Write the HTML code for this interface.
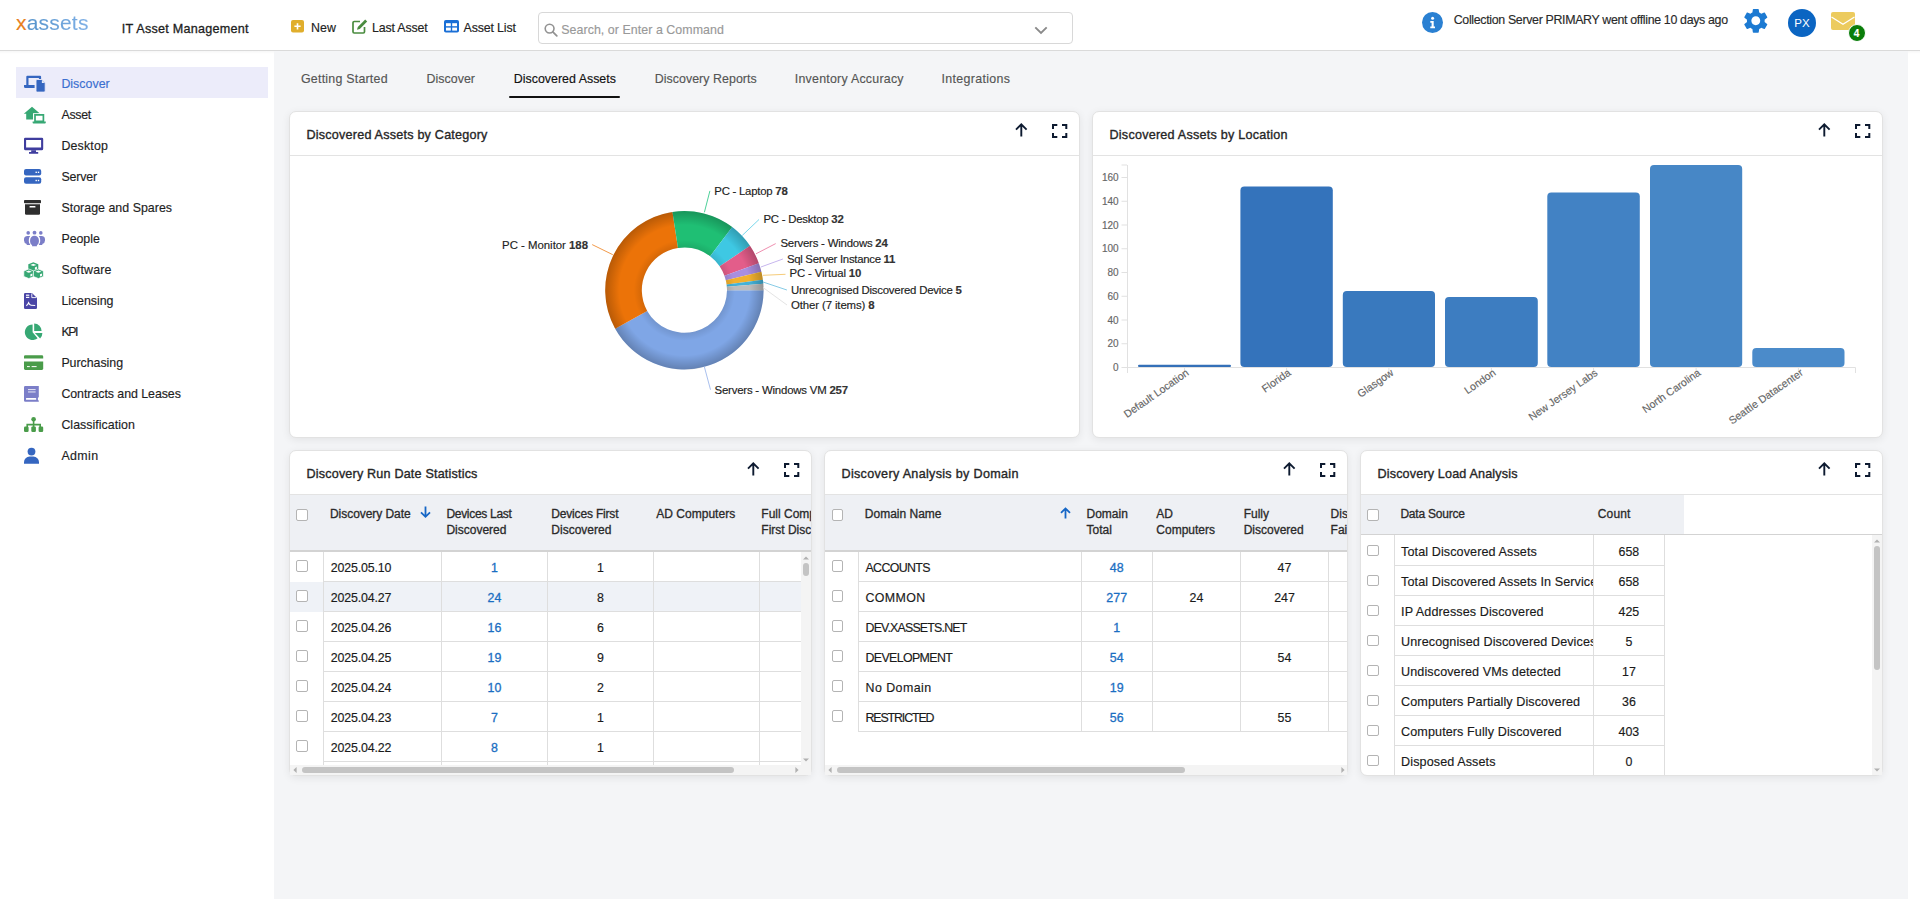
<!DOCTYPE html><html><head><meta charset="utf-8"><title>xassets</title><style>
*{box-sizing:border-box;margin:0;padding:0}
html,body{width:1920px;height:911px;overflow:hidden;background:#fff;font-family:"Liberation Sans",sans-serif;color:#222}
.t{position:absolute;line-height:1;white-space:nowrap;-webkit-text-stroke:0.15px currentColor}
.a{position:absolute}
svg{position:absolute;overflow:visible}
.card{position:absolute;background:#fff;border:1px solid #e2e2e2;border-radius:7px;box-shadow:0 2px 8px rgba(0,0,0,0.075)}
</style></head><body>
<div class="a" style="left:0;top:0;width:1920px;height:50px;background:#fff"></div>
<div class="a" style="left:0;top:50px;width:1920px;height:1px;background:#dadada"></div>
<div class="a" style="left:0;top:51px;width:1920px;height:3px;background:linear-gradient(rgba(0,0,0,0.03),rgba(0,0,0,0))"></div>
<div class="t" style="left:16px;top:11.5px;font-size:21px;line-height:21px;letter-spacing:0.2px;"><span style="color:#e87f1e">x</span><span style="background:linear-gradient(90deg,#5593cb,#7fb0e6);-webkit-background-clip:text;color:transparent">assets</span></div>
<div class="t" style="left:121.70px;top:23.00px;font-size:12.6px;color:#1e1e1e;letter-spacing:0.259px;-webkit-text-stroke:0.3px currentColor;">IT Asset Management</div>
<svg style="left:291px;top:20px" width="13" height="13" viewBox="0 0 13 13"><rect x="0" y="0" width="13" height="12.5" rx="2" fill="#e0ae2c"/><path d="M6.5 3.2v6.2M3.4 6.3h6.2" stroke="#fff" stroke-width="1.6"/></svg>
<div class="t" style="left:311.00px;top:22.00px;font-size:12.4px;color:#222;letter-spacing:0.097px;">New</div>
<svg style="left:352px;top:19px" width="16" height="15" viewBox="0 0 16 15"><path d="M8 2.5H2.2a1.2 1.2 0 0 0-1.2 1.2v9.1a1.2 1.2 0 0 0 1.2 1.2h9.1a1.2 1.2 0 0 0 1.2-1.2V8" fill="none" stroke="#4a8c3f" stroke-width="1.7"/><path d="M13.2 0.6l2 2-7.4 7.4-2.8 0.8 0.8-2.8z" fill="#4a8c3f"/></svg>
<div class="t" style="left:372.00px;top:22.00px;font-size:12.4px;color:#222;letter-spacing:-0.162px;">Last Asset</div>
<svg style="left:444px;top:20px" width="15" height="13" viewBox="0 0 15 13"><rect x="0" y="0" width="15" height="12.6" rx="1.8" fill="#1a6fd6"/><rect x="2" y="3.2" width="4.8" height="3" fill="#fff"/><rect x="8.2" y="3.2" width="4.8" height="3" fill="#fff"/><rect x="2" y="7.6" width="4.8" height="3" fill="#fff"/><rect x="8.2" y="7.6" width="4.8" height="3" fill="#fff"/></svg>
<div class="t" style="left:463.50px;top:22.00px;font-size:12.4px;color:#222;letter-spacing:-0.139px;">Asset List</div>
<div class="a" style="left:538px;top:12px;width:535px;height:32px;border:1px solid #d8d8d8;border-radius:4px;background:#fff"></div>
<svg style="left:544px;top:22.5px" width="14" height="14" viewBox="0 0 14 14"><circle cx="5.6" cy="5.6" r="4.4" fill="none" stroke="#929292" stroke-width="1.6"/><path d="M8.8 8.8l4 4" stroke="#929292" stroke-width="1.8" stroke-linecap="round"/></svg>
<div class="t" style="left:561.25px;top:24.00px;font-size:12.4px;color:#999999;letter-spacing:0.059px;">Search, or Enter a Command</div>
<svg style="left:1034px;top:25.5px" width="14" height="9" viewBox="0 0 14 9"><path d="M1.3 1.3l5.7 5.7 5.7-5.7" fill="none" stroke="#8a8a8a" stroke-width="1.9"/></svg>
<svg style="left:1422px;top:11.5px" width="21" height="21" viewBox="0 0 21 21"><circle cx="10.5" cy="10.5" r="10.5" fill="#2a80d2"/><circle cx="10.6" cy="6.2" r="1.5" fill="#fff"/><path d="M8.3 9h3.4v5.6h1.3v1.7H8.3v-1.7h1.3v-3.9H8.3z" fill="#fff"/></svg>
<div class="t" style="left:1453.75px;top:14.00px;font-size:12.4px;color:#2a2a2a;letter-spacing:-0.334px;">Collection Server PRIMARY went offline 10 days ago</div>
<svg style="left:1741.4px;top:6px" width="29.6" height="29.6" viewBox="0 0 24 24"><path fill="#1c7ad2" fill-rule="evenodd" d="M19.14 12.94c.04-.3.06-.61.06-.94 0-.32-.02-.64-.07-.94l2.03-1.58a.49.49 0 0 0 .12-.61l-1.92-3.32a.488.488 0 0 0-.59-.22l-2.39.96c-.5-.38-1.03-.7-1.62-.94l-.36-2.54a.484.484 0 0 0-.48-.41h-3.84c-.24 0-.43.17-.47.41l-.36 2.54c-.59.24-1.13.57-1.62.94l-2.39-.96c-.22-.08-.47 0-.59.22L2.74 8.87c-.12.21-.08.47.12.61l2.03 1.58c-.05.3-.09.63-.09.94s.02.64.07.94l-2.03 1.58a.49.49 0 0 0-.12.61l1.92 3.32c.12.22.37.29.59.22l2.39-.96c.5.38 1.03.7 1.62.94l.36 2.54c.05.24.24.41.48.41h3.84c.24 0 .44-.17.47-.41l.36-2.54c.59-.24 1.13-.56 1.62-.94l2.39.96c.22.08.47 0 .59-.22l1.92-3.32c.12-.22.07-.47-.12-.61l-2.01-1.58zM12 15.6c-1.98 0-3.6-1.62-3.6-3.6s1.62-3.6 3.6-3.6 3.6 1.62 3.6 3.6-1.62 3.6-3.6 3.6z"/></svg>
<div class="a" style="left:1788px;top:8.75px;width:28px;height:28px;border-radius:50%;background:#0b65c2"></div>
<div class="t" style="left:1794.33px;top:18.00px;font-size:11.5px;color:#fff;-webkit-text-stroke:0;">PX</div>
<svg style="left:1830.8px;top:12px" width="24" height="18" viewBox="0 0 24 18"><rect x="0" y="0" width="24" height="18" rx="2" fill="#eccb5e"/><path d="M0.5 5l11.5 7.3L23.5 5" fill="none" stroke="#fff" stroke-width="1.3"/></svg>
<div class="a" style="left:1847.5px;top:23.5px;width:18px;height:18px;border-radius:50%;background:#0a7d0a;border:1px solid #fff"></div>
<div class="t" style="left:1853.72px;top:29.00px;font-size:10px;color:#fff;font-weight:bold;">4</div>
<div class="a" style="left:16px;top:67px;width:252px;height:31px;background:#ececfa"></div>
<div class="t" style="left:61.40px;top:78.00px;font-size:12.4px;color:#3b6fd0;letter-spacing:0.010px;">Discover</div>
<div class="t" style="left:61.40px;top:109.00px;font-size:12.4px;color:#1e1e1e;letter-spacing:-0.278px;">Asset</div>
<div class="t" style="left:61.40px;top:140.00px;font-size:12.4px;color:#1e1e1e;letter-spacing:0.185px;">Desktop</div>
<div class="t" style="left:61.40px;top:171.00px;font-size:12.4px;color:#1e1e1e;letter-spacing:-0.165px;">Server</div>
<div class="t" style="left:61.40px;top:202.00px;font-size:12.4px;color:#1e1e1e;letter-spacing:0.024px;">Storage and Spares</div>
<div class="t" style="left:61.40px;top:233.00px;font-size:12.4px;color:#1e1e1e;letter-spacing:-0.022px;">People</div>
<div class="t" style="left:61.40px;top:264.00px;font-size:12.4px;color:#1e1e1e;letter-spacing:0.152px;">Software</div>
<div class="t" style="left:61.40px;top:295.00px;font-size:12.4px;color:#1e1e1e;letter-spacing:-0.036px;">Licensing</div>
<div class="t" style="left:61.40px;top:326.00px;font-size:12.4px;color:#1e1e1e;letter-spacing:-1.494px;">KPI</div>
<div class="t" style="left:61.40px;top:357.00px;font-size:12.4px;color:#1e1e1e;letter-spacing:-0.037px;">Purchasing</div>
<div class="t" style="left:61.40px;top:388.00px;font-size:12.4px;color:#1e1e1e;letter-spacing:-0.054px;">Contracts and Leases</div>
<div class="t" style="left:61.40px;top:419.00px;font-size:12.4px;color:#1e1e1e;letter-spacing:0.035px;">Classification</div>
<div class="t" style="left:61.40px;top:450.00px;font-size:12.4px;color:#1e1e1e;letter-spacing:0.388px;">Admin</div>

<svg style="left:0;top:0" width="274" height="911" viewBox="0 0 274 911">
 <g fill="#3566c0">
  <path d="M27.3 75.8h12.8a1 1 0 0 1 1 1v2.4h-2.2v-1.2H28.5v7.2h-2.2v-8.4a1 1 0 0 1 1-1z"/>
  <path d="M24 85.1h10.6v3H25.4a1.4 1.4 0 0 1-1.4-1.4z"/>
  <path d="M37.2 79.5h4.6l3.4 3.4v8a1.2 1.2 0 0 1-1.2 1.2h-6.8a1.2 1.2 0 0 1-1.2-1.2v-10.2a1.2 1.2 0 0 1 1.2-1.2z" stroke="#ececfa" stroke-width="0.9"/>
 </g>
 <path d="M41.9 80.3v2.6h2.6z" fill="#fff" opacity="0.9"/>
 <g fill="#37a874">
  <path d="M23.8 113.8L32 106.8l8.2 7H37.6v5.8H26.2v-5.8z"/>
  <rect x="33" y="113.2" width="13.5" height="11" fill="#fff"/>
  <path d="M35 114.9h8.4v6.4h-8.4z" fill="none" stroke="#37a874" stroke-width="1.7"/>
  <path d="M32.6 121.4h13.2v1.1a0.9 0.9 0 0 1-0.9 0.9h-11.4a0.9 0.9 0 0 1-0.9-0.9z"/>
 </g>
 <g fill="#3f3d9e">
  <path d="M25.3 137.8h16.6a1.3 1.3 0 0 1 1.3 1.3v9.6a1.6 1.6 0 0 1-1.6 1.6H25.6a1.6 1.6 0 0 1-1.6-1.6v-9.6a1.3 1.3 0 0 1 1.3-1.3zM26.1 140v7.5h15v-7.5z" fill-rule="evenodd"/>
  <path d="M31.2 150.3h4.8v1.8h2.2v1.7h-9.2v-1.7h2.2z"/>
 </g>
 <g fill="#3566c0">
  <rect x="24" y="169.1" width="17.2" height="6.4" rx="2"/>
  <rect x="24" y="177.3" width="17.2" height="6.4" rx="2"/>
 </g>
 <g fill="#fff"><rect x="35.5" y="171.6" width="1.4" height="1.4"/><rect x="37.8" y="171.6" width="1.4" height="1.4"/><rect x="35.5" y="179.8" width="1.4" height="1.4"/><rect x="37.8" y="179.8" width="1.4" height="1.4"/></g>
 <g fill="#2e2e2e">
  <rect x="24" y="200.1" width="17" height="3.2" rx="0.8"/>
  <path d="M25 204.2h15v9.2a1.3 1.3 0 0 1-1.3 1.3H26.3a1.3 1.3 0 0 1-1.3-1.3z"/>
 </g>
 <rect x="29.5" y="206" width="6" height="1.5" rx="0.6" fill="#fff"/>
 <g fill="#7b7ec8">
  <circle cx="28.2" cy="232.9" r="1.8"/><circle cx="34.5" cy="232.7" r="1.9"/><circle cx="40.8" cy="232.9" r="1.8"/>
  <path d="M27.6 236h2.6a6 6 0 0 0-1.4 3.9v1.4a4.4 4.4 0 0 0 1.3 3.1v0.6h-3.4v-0.9a3.8 3.8 0 0 1-2.7-3.6v-1.2a3.3 3.3 0 0 1 3.6-3.3z"/>
  <path d="M41.4 236h-2.6a6 6 0 0 1 1.4 3.9v1.4a4.4 4.4 0 0 1-1.3 3.1v0.6h3.4v-0.9a3.8 3.8 0 0 0 2.7-3.6v-1.2a3.3 3.3 0 0 0-3.6-3.3z"/>
  <path d="M34.5 235.8a4.4 4.4 0 0 1 4.4 4.4v1.6a4 4 0 0 1-2 3.4v1h-4.8v-1a4 4 0 0 1-2-3.4v-1.6a4.4 4.4 0 0 1 4.4-4.4z"/>
 </g>
 <g><path d="M33.3 262.2l5 2v5.5l-5 2-5-2v-5.5z" fill="#37a874"/><path d="M33.3 263.8l3 1.1-3 1.1-3-1.1z" fill="#fff"/><path d="M34.9 267.4l2-0.8v2.3l-2 0.8z" fill="#fff"/><path d="M28.8 269l5 2v5.5l-5 2-5-2v-5.5z" fill="#37a874" stroke="#fff" stroke-width="0.7"/><path d="M28.8 270.6l3 1.1-3 1.1-3-1.1z" fill="#fff"/><path d="M30.400000000000002 274.2l2-0.8v2.3l-2 0.8z" fill="#fff"/><path d="M38.4 269l5 2v5.5l-5 2-5-2v-5.5z" fill="#37a874" stroke="#fff" stroke-width="0.7"/><path d="M38.4 270.6l3 1.1-3 1.1-3-1.1z" fill="#fff"/><path d="M40.0 274.2l2-0.8v2.3l-2 0.8z" fill="#fff"/></g>
 <g fill="#4a46a6">
  <path d="M25.2 292.9h6.8l5 5v9.8a1.2 1.2 0 0 1-1.2 1.2H25.2a1.2 1.2 0 0 1-1.2-1.2V294.1a1.2 1.2 0 0 1 1.2-1.2z"/>
 </g>
 <g fill="#fff"><rect x="26" y="294.6" width="3.3" height="1.2"/><rect x="26" y="296.8" width="3.3" height="1.2"/><path d="M31.8 293.4v4.2h4.4" fill="none" stroke="#fff" stroke-width="0.9"/></g>
 <path d="M26.2 305.6Q27.7 305.4 28.6 302.8Q29.6 305.3 31.2 305.2L35.2 305.5" fill="none" stroke="#fff" stroke-width="1.1"/>
 <g fill="#37a874">
  <path d="M32.6 332.2V324.4A7.8 7.8 0 1 0 37.6 338.2Z"/>
  <path d="M34.2 331V323.6A7.4 7.4 0 0 1 41.6 331Z"/>
  <path d="M34.9 333.1H42.4A7.5 7.5 0 0 1 40.1 338.5Z"/>
 </g>
 <g fill="#4a9c4a">
  <path d="M25.3 355.3h16.6a1.3 1.3 0 0 1 1.3 1.3v1.9H24v-1.9a1.3 1.3 0 0 1 1.3-1.3z"/>
  <path d="M24 361.4h19.2v7.2a1.3 1.3 0 0 1-1.3 1.3H25.3a1.3 1.3 0 0 1-1.3-1.3z"/>
 </g>
 <g fill="#fff"><rect x="27" y="366.1" width="2.8" height="1"/><rect x="31.6" y="366.1" width="5" height="1"/></g>
 <path d="M25.3 385.9h13.5v11.2l-0.9 0.9v1.8l0.9 0.9v1.1H25.3a1.3 1.3 0 0 1-1.3-1.3V387.2a1.3 1.3 0 0 1 1.3-1.3z" fill="#7b7ec8"/>
 <g fill="#fff"><rect x="28" y="389" width="7.6" height="1.1" opacity="0.75"/><rect x="28" y="391.4" width="7.6" height="1.1" opacity="0.75"/><rect x="26" y="397.9" width="10.2" height="1.8" rx="0.5"/></g>
 <g fill="#4a9c4a">
  <circle cx="33.6" cy="419.2" r="2.3"/>
  <rect x="32.8" y="420.5" width="1.6" height="4"/>
  <path d="M26.4 423.8h14.6v3.2h-1.6v-1.6h-11.4v1.6h-1.6z"/>
  <path d="M32.8 424.5h1.6v2.5h-1.6z"/>
  <rect x="24" y="426.6" width="4.6" height="5.4" rx="1.2"/>
  <rect x="31.3" y="426.6" width="4.6" height="5.4" rx="1.2"/>
  <rect x="38.6" y="426.6" width="4.6" height="5.4" rx="1.2"/>
 </g>
 <g fill="#3566c0">
  <circle cx="31.5" cy="451.6" r="3.9"/>
  <path d="M24 463.8v-1.6a5.6 5.6 0 0 1 5.6-5.6h3.8a5.6 5.6 0 0 1 5.6 5.6v1.6z"/>
 </g>
</svg>
<div class="a" style="left:274px;top:51px;width:1634px;height:848px;background:#f4f5f7"></div>
<div class="t" style="left:301.00px;top:73.00px;font-size:12.4px;color:#555;letter-spacing:0.228px;">Getting Started</div>
<div class="t" style="left:426.40px;top:73.00px;font-size:12.4px;color:#555;letter-spacing:0.053px;">Discover</div>
<div class="t" style="left:513.75px;top:73.00px;font-size:12.4px;color:#111;letter-spacing:0.016px;">Discovered Assets</div>
<div class="t" style="left:654.70px;top:73.00px;font-size:12.4px;color:#555;letter-spacing:0.050px;">Discovery Reports</div>
<div class="t" style="left:794.80px;top:73.00px;font-size:12.4px;color:#555;letter-spacing:0.238px;">Inventory Accuracy</div>
<div class="t" style="left:941.60px;top:73.00px;font-size:12.4px;color:#555;letter-spacing:0.328px;">Integrations</div>
<div class="a" style="left:509px;top:95.8px;width:111px;height:2.2px;border-radius:1px;background:#111"></div>
<div class="card" style="left:289px;top:111px;width:791px;height:327px"></div>
<div class="a" style="left:290px;top:155px;width:789px;height:1px;background:#e3e3e3"></div>
<div class="t" style="left:306.50px;top:129.00px;font-size:12.6px;color:#262626;letter-spacing:0.211px;-webkit-text-stroke:0.35px currentColor;">Discovered Assets by Category</div>
<svg style="left:1015px;top:123.3px" width="13" height="14" viewBox="0 0 13 14"><path d="M6.3 13.6V1.6M1 6.6l5.3-5.2 5.3 5.2" fill="none" stroke="#0d1a30" stroke-width="1.9"/></svg>
<svg style="left:1052px;top:123.7px" width="15" height="14" viewBox="0 0 15 14"><path d="M1 5V1h4.3M10 1h4.3v4M14.3 9v4H10M5.3 13H1V9" fill="none" stroke="#0d1a30" stroke-width="2"/></svg>
<div class="card" style="left:1092px;top:111px;width:791px;height:327px"></div>
<div class="a" style="left:1093px;top:155px;width:789px;height:1px;background:#e3e3e3"></div>
<div class="t" style="left:1109.50px;top:129.00px;font-size:12.6px;color:#262626;letter-spacing:0.229px;-webkit-text-stroke:0.35px currentColor;">Discovered Assets by Location</div>
<svg style="left:1818px;top:123.3px" width="13" height="14" viewBox="0 0 13 14"><path d="M6.3 13.6V1.6M1 6.6l5.3-5.2 5.3 5.2" fill="none" stroke="#0d1a30" stroke-width="1.9"/></svg>
<svg style="left:1855px;top:123.7px" width="15" height="14" viewBox="0 0 15 14"><path d="M1 5V1h4.3M10 1h4.3v4M14.3 9v4H10M5.3 13H1V9" fill="none" stroke="#0d1a30" stroke-width="2"/></svg>
<div class="card" style="left:289px;top:450px;width:523px;height:326px"></div>
<div class="a" style="left:290px;top:494px;width:521px;height:1px;background:#e3e3e3"></div>
<div class="t" style="left:306.50px;top:468.00px;font-size:12.6px;color:#262626;letter-spacing:0.180px;-webkit-text-stroke:0.35px currentColor;">Discovery Run Date Statistics</div>
<svg style="left:747px;top:462.3px" width="13" height="14" viewBox="0 0 13 14"><path d="M6.3 13.6V1.6M1 6.6l5.3-5.2 5.3 5.2" fill="none" stroke="#0d1a30" stroke-width="1.9"/></svg>
<svg style="left:784px;top:462.7px" width="15" height="14" viewBox="0 0 15 14"><path d="M1 5V1h4.3M10 1h4.3v4M14.3 9v4H10M5.3 13H1V9" fill="none" stroke="#0d1a30" stroke-width="2"/></svg>
<div class="card" style="left:824px;top:450px;width:524px;height:326px"></div>
<div class="a" style="left:825px;top:494px;width:522px;height:1px;background:#e3e3e3"></div>
<div class="t" style="left:841.50px;top:468.00px;font-size:12.6px;color:#262626;letter-spacing:0.305px;-webkit-text-stroke:0.35px currentColor;">Discovery Analysis by Domain</div>
<svg style="left:1283px;top:462.3px" width="13" height="14" viewBox="0 0 13 14"><path d="M6.3 13.6V1.6M1 6.6l5.3-5.2 5.3 5.2" fill="none" stroke="#0d1a30" stroke-width="1.9"/></svg>
<svg style="left:1320px;top:462.7px" width="15" height="14" viewBox="0 0 15 14"><path d="M1 5V1h4.3M10 1h4.3v4M14.3 9v4H10M5.3 13H1V9" fill="none" stroke="#0d1a30" stroke-width="2"/></svg>
<div class="card" style="left:1360px;top:450px;width:523px;height:326px"></div>
<div class="a" style="left:1361px;top:494px;width:521px;height:1px;background:#e3e3e3"></div>
<div class="t" style="left:1377.50px;top:468.00px;font-size:12.6px;color:#262626;letter-spacing:0.156px;-webkit-text-stroke:0.35px currentColor;">Discovery Load Analysis</div>
<svg style="left:1818px;top:462.3px" width="13" height="14" viewBox="0 0 13 14"><path d="M6.3 13.6V1.6M1 6.6l5.3-5.2 5.3 5.2" fill="none" stroke="#0d1a30" stroke-width="1.9"/></svg>
<svg style="left:1855px;top:462.7px" width="15" height="14" viewBox="0 0 15 14"><path d="M1 5V1h4.3M10 1h4.3v4M14.3 9v4H10M5.3 13H1V9" fill="none" stroke="#0d1a30" stroke-width="2"/></svg>
<svg style="left:0;top:0" width="1920" height="911" viewBox="0 0 1920 911"><defs><radialGradient id="shade" gradientUnits="userSpaceOnUse" cx="684.4" cy="290.2" r="79.2"><stop offset="0.538" stop-color="#000" stop-opacity="0.10"/><stop offset="0.639" stop-color="#000" stop-opacity="0.0"/><stop offset="0.823" stop-color="#000" stop-opacity="0.0"/><stop offset="1" stop-color="#000" stop-opacity="0.22"/></radialGradient></defs><path d="M763.60 290.20A79.2 79.2 0 0 1 615.18 328.68L647.17 310.90A42.6 42.6 0 0 0 727.00 290.20Z" fill="#7fa6e6"/><path d="M615.18 328.68A79.2 79.2 0 0 1 672.47 211.90L677.98 248.09A42.6 42.6 0 0 0 647.17 310.90Z" fill="#ec7308"/><path d="M672.47 211.90A79.2 79.2 0 0 1 732.22 227.07L710.12 256.24A42.6 42.6 0 0 0 677.98 248.09Z" fill="#1fbf74"/><path d="M732.22 227.07A79.2 79.2 0 0 1 750.01 245.84L719.69 266.34A42.6 42.6 0 0 0 710.12 256.24Z" fill="#3ec8e3"/><path d="M750.01 245.84A79.2 79.2 0 0 1 758.84 263.15L724.44 275.65A42.6 42.6 0 0 0 719.69 266.34Z" fill="#e35d8a"/><path d="M758.84 263.15A79.2 79.2 0 0 1 761.41 271.70L725.82 280.25A42.6 42.6 0 0 0 724.44 275.65Z" fill="#a98ee0"/><path d="M761.41 271.70A79.2 79.2 0 0 1 762.90 279.68L726.62 284.54A42.6 42.6 0 0 0 725.82 280.25Z" fill="#f2b12e"/><path d="M762.90 279.68A79.2 79.2 0 0 1 763.33 283.71L726.86 286.71A42.6 42.6 0 0 0 726.62 284.54Z" fill="#44b2d8"/><path d="M763.33 283.71A79.2 79.2 0 0 1 763.60 290.20L727.00 290.20A42.6 42.6 0 0 0 726.86 286.71Z" fill="#bdbdbd"/><path d="M763.6 290.2A79.2 79.2 0 1 1 605.1999999999999 290.2A79.2 79.2 0 1 1 763.6 290.2ZM727.0 290.2A42.6 42.6 0 1 0 641.8 290.2A42.6 42.6 0 1 0 727.0 290.2Z" fill="url(#shade)" fill-rule="evenodd"/><path d="M704.3 366.6L710.5 389.7" stroke="#a9c0ee" stroke-width="1"/><path d="M612.8 254.7L592.2 244.6" stroke="#f29a4a" stroke-width="1"/><path d="M704.4 212.3L709.9 190.9" stroke="#4fd19a" stroke-width="1"/><path d="M742.3 235.4L759 219.5" stroke="#7ad8ec" stroke-width="1"/><path d="M756 253.8L775.7 243.6" stroke="#ef8fb0" stroke-width="1"/><path d="M760.9 267L782.9 259" stroke="#c7b6ee" stroke-width="1"/><path d="M763 275.3L785.5 274.3" stroke="#f6cc7a" stroke-width="1"/><path d="M763 282L786.9 290" stroke="#86cbe6" stroke-width="1"/><path d="M763 287.5L787 305" stroke="#e4e4e4" stroke-width="1"/><g stroke="#e1e1e1" stroke-width="1" fill="none"><path d="M1127.5 165v208"/><path d="M1127 367.5H1855.5"/><path d="M1855.5 367.5v5.5"/><path d="M1121.5 367.50H1127"/><path d="M1121.5 343.75H1127"/><path d="M1121.5 320.00H1127"/><path d="M1121.5 296.25H1127"/><path d="M1121.5 272.50H1127"/><path d="M1121.5 248.75H1127"/><path d="M1121.5 225.00H1127"/><path d="M1121.5 201.25H1127"/><path d="M1121.5 177.50H1127"/><path d="M1121.5 165H1127"/><path d="M1184.50 367.5v5"/><path d="M1286.60 367.5v5"/><path d="M1388.90 367.5v5"/><path d="M1491.40 367.5v5"/><path d="M1593.55 367.5v5"/><path d="M1696.10 367.5v5"/><path d="M1798.40 367.5v5"/></g><rect x="1138" y="364.80" width="93.00" height="2.20" rx="1.1" fill="#3470b8"/><rect x="1240.4" y="186.50" width="92.40" height="180.50" rx="4" fill="#3473bb"/><rect x="1342.8" y="291.00" width="92.20" height="76.00" rx="4" fill="#3979be"/><rect x="1445" y="296.94" width="92.80" height="70.06" rx="4" fill="#3d7dc1"/><rect x="1547.3" y="192.44" width="92.50" height="174.56" rx="4" fill="#4282c4"/><rect x="1650" y="165.12" width="92.20" height="201.88" rx="4" fill="#4787c6"/><rect x="1752.3" y="348.00" width="92.20" height="19.00" rx="4" fill="#4b8bca"/></svg>
<div class="t" style="left:502.1px;top:240px;font-size:11.4px;color:#222;letter-spacing:-0.011px">PC - Monitor <b style="color:#333">188</b></div>
<div class="t" style="left:714.3px;top:186px;font-size:11.4px;color:#222;letter-spacing:-0.245px">PC - Laptop <b style="color:#333">78</b></div>
<div class="t" style="left:763.4px;top:214px;font-size:11.4px;color:#222;letter-spacing:-0.231px">PC - Desktop <b style="color:#333">32</b></div>
<div class="t" style="left:780.4px;top:238px;font-size:11.4px;color:#222;letter-spacing:-0.210px">Servers - Windows <b style="color:#333">24</b></div>
<div class="t" style="left:786.9px;top:254px;font-size:11.4px;color:#222;letter-spacing:-0.295px">Sql Server Instance <b style="color:#333">11</b></div>
<div class="t" style="left:789.5px;top:268px;font-size:11.4px;color:#222;letter-spacing:-0.144px">PC - Virtual <b style="color:#333">10</b></div>
<div class="t" style="left:791px;top:285px;font-size:11.4px;color:#222;letter-spacing:-0.227px">Unrecognised Discovered Device <b style="color:#333">5</b></div>
<div class="t" style="left:791px;top:300px;font-size:11.4px;color:#222;letter-spacing:-0.114px">Other (7 items) <b style="color:#333">8</b></div>
<div class="t" style="left:714.5px;top:385px;font-size:11.4px;color:#222;letter-spacing:-0.192px">Servers - Windows VM <b style="color:#333">257</b></div>
<div class="t" style="left:1113.04px;top:363.00px;font-size:10px;color:#666;">0</div>
<div class="t" style="left:1107.48px;top:339.00px;font-size:10px;color:#666;">20</div>
<div class="t" style="left:1107.48px;top:316.00px;font-size:10px;color:#666;">40</div>
<div class="t" style="left:1107.48px;top:292.00px;font-size:10px;color:#666;">60</div>
<div class="t" style="left:1107.48px;top:268.00px;font-size:10px;color:#666;">80</div>
<div class="t" style="left:1101.91px;top:244.00px;font-size:10px;color:#666;">100</div>
<div class="t" style="left:1101.91px;top:221.00px;font-size:10px;color:#666;">120</div>
<div class="t" style="left:1101.91px;top:197.00px;font-size:10px;color:#666;">140</div>
<div class="t" style="left:1101.91px;top:173.00px;font-size:10px;color:#666;">160</div>
<div class="t" style="left:1110.89px;top:366.20px;font-size:10.6px;line-height:10.6px;color:#666;transform-origin:100% 50%;transform:rotate(-35deg)">Default Location</div>
<div class="t" style="left:1257.20px;top:366.20px;font-size:10.6px;line-height:10.6px;color:#666;transform-origin:100% 50%;transform:rotate(-35deg)">Florida</div>
<div class="t" style="left:1350.66px;top:366.20px;font-size:10.6px;line-height:10.6px;color:#666;transform-origin:100% 50%;transform:rotate(-35deg)">Glasgow</div>
<div class="t" style="left:1459.03px;top:366.20px;font-size:10.6px;line-height:10.6px;color:#666;transform-origin:100% 50%;transform:rotate(-35deg)">London</div>
<div class="t" style="left:1515.25px;top:366.20px;font-size:10.6px;line-height:10.6px;color:#666;transform-origin:100% 50%;transform:rotate(-35deg)">New Jersey Labs</div>
<div class="t" style="left:1630.76px;top:366.20px;font-size:10.6px;line-height:10.6px;color:#666;transform-origin:100% 50%;transform:rotate(-35deg)">North Carolina</div>
<div class="t" style="left:1713.60px;top:366.20px;font-size:10.6px;line-height:10.6px;color:#666;transform-origin:100% 50%;transform:rotate(-35deg)">Seattle Datacenter</div>
<div class="a" style="left:290px;top:495px;width:521px;height:280px;overflow:hidden"><div class="a" style="left:-290px;top:-495px;width:1920px;height:911px">
<div class="a" style="left:290px;top:494.5px;width:521px;height:56px;background:#eef0f4"></div>
<div class="a" style="left:290px;top:550px;width:521px;height:1.5px;background:#d3d3d3"></div>
<div class="a" style="left:290px;top:581.5px;width:511px;height:30px;background:#eff2f7"></div>
<div class="a" style="left:296.4px;top:509.3px;width:11.6px;height:11.6px;border:1px solid #b4b4b4;border-radius:2px;background:#fff"></div>
<div class="t" style="left:330.00px;top:508.00px;font-size:12px;color:#2a2a2a;letter-spacing:-0.051px;-webkit-text-stroke:0.3px currentColor;">Discovery Date</div>
<svg style="left:419.6px;top:506.3px" width="11" height="12" viewBox="0 0 11 12"><path d="M5.5 0.5v10.2M1 6.3l4.5 4.5 4.5-4.5" fill="none" stroke="#1566c6" stroke-width="1.8"/></svg>
<div class="t" style="left:446.40px;top:508.00px;font-size:12px;color:#2a2a2a;letter-spacing:-0.300px;-webkit-text-stroke:0.3px currentColor;">Devices Last</div>
<div class="t" style="left:446.40px;top:524.00px;font-size:12px;color:#2a2a2a;-webkit-text-stroke:0.3px currentColor;">Discovered</div>
<div class="t" style="left:551.30px;top:508.00px;font-size:12px;color:#2a2a2a;letter-spacing:-0.179px;-webkit-text-stroke:0.3px currentColor;">Devices First</div>
<div class="t" style="left:551.30px;top:524.00px;font-size:12px;color:#2a2a2a;-webkit-text-stroke:0.3px currentColor;">Discovered</div>
<div class="t" style="left:656.20px;top:508.00px;font-size:12px;color:#2a2a2a;letter-spacing:0.028px;-webkit-text-stroke:0.3px currentColor;">AD Computers</div>
<div class="t" style="left:761.30px;top:508.00px;font-size:12px;color:#2a2a2a;-webkit-text-stroke:0.3px currentColor;">Full Computers</div>
<div class="t" style="left:761.30px;top:524.00px;font-size:12px;color:#2a2a2a;-webkit-text-stroke:0.3px currentColor;">First Discovered</div>
<div class="a" style="left:296.4px;top:560px;width:11.6px;height:11.6px;border:1px solid #b4b4b4;border-radius:2px;background:#fff"></div>
<div class="t" style="left:330.70px;top:562.00px;font-size:12.4px;color:#1a1a1a;letter-spacing:-0.151px;">2025.05.10</div>
<div class="t" style="left:491.05px;top:562.00px;font-size:12.4px;color:#1a6ec2;-webkit-text-stroke:0.3px currentColor;">1</div>
<div class="t" style="left:596.95px;top:562.00px;font-size:12.4px;color:#1a1a1a;">1</div>
<div class="a" style="left:323.5px;top:581px;width:477.5px;height:1px;background:#dedede"></div>
<div class="a" style="left:296.4px;top:590px;width:11.6px;height:11.6px;border:1px solid #b4b4b4;border-radius:2px;background:#fff"></div>
<div class="t" style="left:330.70px;top:592.00px;font-size:12.4px;color:#1a1a1a;letter-spacing:-0.151px;">2025.04.27</div>
<div class="t" style="left:487.60px;top:592.00px;font-size:12.4px;color:#1a6ec2;-webkit-text-stroke:0.3px currentColor;">24</div>
<div class="t" style="left:596.95px;top:592.00px;font-size:12.4px;color:#1a1a1a;">8</div>
<div class="a" style="left:323.5px;top:611px;width:477.5px;height:1px;background:#dedede"></div>
<div class="a" style="left:296.4px;top:620px;width:11.6px;height:11.6px;border:1px solid #b4b4b4;border-radius:2px;background:#fff"></div>
<div class="t" style="left:330.70px;top:622.00px;font-size:12.4px;color:#1a1a1a;letter-spacing:-0.151px;">2025.04.26</div>
<div class="t" style="left:487.60px;top:622.00px;font-size:12.4px;color:#1a6ec2;-webkit-text-stroke:0.3px currentColor;">16</div>
<div class="t" style="left:596.95px;top:622.00px;font-size:12.4px;color:#1a1a1a;">6</div>
<div class="a" style="left:323.5px;top:641px;width:477.5px;height:1px;background:#dedede"></div>
<div class="a" style="left:296.4px;top:650px;width:11.6px;height:11.6px;border:1px solid #b4b4b4;border-radius:2px;background:#fff"></div>
<div class="t" style="left:330.70px;top:652.00px;font-size:12.4px;color:#1a1a1a;letter-spacing:-0.151px;">2025.04.25</div>
<div class="t" style="left:487.60px;top:652.00px;font-size:12.4px;color:#1a6ec2;-webkit-text-stroke:0.3px currentColor;">19</div>
<div class="t" style="left:596.95px;top:652.00px;font-size:12.4px;color:#1a1a1a;">9</div>
<div class="a" style="left:323.5px;top:671px;width:477.5px;height:1px;background:#dedede"></div>
<div class="a" style="left:296.4px;top:680px;width:11.6px;height:11.6px;border:1px solid #b4b4b4;border-radius:2px;background:#fff"></div>
<div class="t" style="left:330.70px;top:682.00px;font-size:12.4px;color:#1a1a1a;letter-spacing:-0.151px;">2025.04.24</div>
<div class="t" style="left:487.60px;top:682.00px;font-size:12.4px;color:#1a6ec2;-webkit-text-stroke:0.3px currentColor;">10</div>
<div class="t" style="left:596.95px;top:682.00px;font-size:12.4px;color:#1a1a1a;">2</div>
<div class="a" style="left:323.5px;top:701px;width:477.5px;height:1px;background:#dedede"></div>
<div class="a" style="left:296.4px;top:710px;width:11.6px;height:11.6px;border:1px solid #b4b4b4;border-radius:2px;background:#fff"></div>
<div class="t" style="left:330.70px;top:712.00px;font-size:12.4px;color:#1a1a1a;letter-spacing:-0.151px;">2025.04.23</div>
<div class="t" style="left:491.05px;top:712.00px;font-size:12.4px;color:#1a6ec2;-webkit-text-stroke:0.3px currentColor;">7</div>
<div class="t" style="left:596.95px;top:712.00px;font-size:12.4px;color:#1a1a1a;">1</div>
<div class="a" style="left:323.5px;top:731px;width:477.5px;height:1px;background:#dedede"></div>
<div class="a" style="left:296.4px;top:740px;width:11.6px;height:11.6px;border:1px solid #b4b4b4;border-radius:2px;background:#fff"></div>
<div class="t" style="left:330.70px;top:742.00px;font-size:12.4px;color:#1a1a1a;letter-spacing:-0.151px;">2025.04.22</div>
<div class="t" style="left:491.05px;top:742.00px;font-size:12.4px;color:#1a6ec2;-webkit-text-stroke:0.3px currentColor;">8</div>
<div class="t" style="left:596.95px;top:742.00px;font-size:12.4px;color:#1a1a1a;">1</div>
<div class="a" style="left:323.5px;top:761px;width:477.5px;height:1px;background:#dedede"></div>
<div class="a" style="left:323.5px;top:791px;width:477.5px;height:1px;background:#dedede"></div>
<div class="a" style="left:323px;top:551.5px;width:1px;height:213.5px;background:#dedede"></div>
<div class="a" style="left:441px;top:551.5px;width:1px;height:213.5px;background:#dedede"></div>
<div class="a" style="left:547px;top:551.5px;width:1px;height:213.5px;background:#dedede"></div>
<div class="a" style="left:653px;top:551.5px;width:1px;height:213.5px;background:#dedede"></div>
<div class="a" style="left:759px;top:551.5px;width:1px;height:213.5px;background:#dedede"></div>
<div class="a" style="left:801px;top:551.5px;width:10px;height:213.5px;background:#f4f4f4"></div>
<svg style="left:803px;top:555.5px" width="6" height="4" viewBox="0 0 6 4"><path d="M0 3.6L3 0.4 6 3.6z" fill="#b0b0b0"/></svg>
<svg style="left:803px;top:758px" width="6" height="4" viewBox="0 0 6 4"><path d="M0 0.4L3 3.6 6 0.4z" fill="#b0b0b0"/></svg>
<div class="a" style="left:803px;top:563px;width:6px;height:12.600000000000023px;border-radius:3px;background:#c4c4c4"></div>
<div class="a" style="left:290px;top:765px;width:511px;height:10px;background:#f4f4f4"></div>
<svg style="left:293px;top:767px" width="4" height="6" viewBox="0 0 4 6"><path d="M3.6 0L0.4 3 3.6 6z" fill="#b0b0b0"/></svg>
<svg style="left:795px;top:767px" width="4" height="6" viewBox="0 0 4 6"><path d="M0.4 0L3.6 3 0.4 6z" fill="#b0b0b0"/></svg>
<div class="a" style="left:302px;top:767px;width:431.75px;height:6px;border-radius:3px;background:#c4c4c4"></div>
<div class="a" style="left:801px;top:765px;width:10px;height:10px;background:#f4f4f4"></div>
</div></div>
<div class="a" style="left:825px;top:495px;width:522px;height:280px;overflow:hidden"><div class="a" style="left:-825px;top:-495px;width:1920px;height:911px">
<div class="a" style="left:825px;top:494.5px;width:522px;height:56px;background:#eef0f4"></div>
<div class="a" style="left:825px;top:550px;width:522px;height:1.5px;background:#d3d3d3"></div>
<div class="a" style="left:831.6px;top:509.3px;width:11.6px;height:11.6px;border:1px solid #b4b4b4;border-radius:2px;background:#fff"></div>
<div class="t" style="left:864.80px;top:508.00px;font-size:12px;color:#2a2a2a;-webkit-text-stroke:0.3px currentColor;">Domain Name</div>
<svg style="left:1059.8px;top:506.8px" width="11" height="12" viewBox="0 0 11 12"><path d="M5.5 11.5V1.5M1 5.9l4.5-4.5 4.5 4.5" fill="none" stroke="#1566c6" stroke-width="1.8"/></svg>
<div class="t" style="left:1086.50px;top:508.00px;font-size:12px;color:#2a2a2a;-webkit-text-stroke:0.3px currentColor;">Domain</div>
<div class="t" style="left:1086.50px;top:524.00px;font-size:12px;color:#2a2a2a;-webkit-text-stroke:0.3px currentColor;">Total</div>
<div class="t" style="left:1156.30px;top:508.00px;font-size:12px;color:#2a2a2a;-webkit-text-stroke:0.3px currentColor;">AD</div>
<div class="t" style="left:1156.30px;top:524.00px;font-size:12px;color:#2a2a2a;-webkit-text-stroke:0.3px currentColor;">Computers</div>
<div class="t" style="left:1243.70px;top:508.00px;font-size:12px;color:#2a2a2a;-webkit-text-stroke:0.3px currentColor;">Fully</div>
<div class="t" style="left:1243.70px;top:524.00px;font-size:12px;color:#2a2a2a;-webkit-text-stroke:0.3px currentColor;">Discovered</div>
<div class="t" style="left:1330.60px;top:508.00px;font-size:12px;color:#2a2a2a;-webkit-text-stroke:0.3px currentColor;">Discovery</div>
<div class="t" style="left:1330.60px;top:524.00px;font-size:12px;color:#2a2a2a;-webkit-text-stroke:0.3px currentColor;">Failed</div>
<div class="a" style="left:831.6px;top:560px;width:11.6px;height:11.6px;border:1px solid #b4b4b4;border-radius:2px;background:#fff"></div>
<div class="t" style="left:865.50px;top:562.00px;font-size:12.4px;color:#1a1a1a;letter-spacing:-0.654px;">ACCOUNTS</div>
<div class="t" style="left:1109.80px;top:562.00px;font-size:12.4px;color:#1a6ec2;-webkit-text-stroke:0.3px currentColor;">48</div>
<div class="t" style="left:1277.60px;top:562.00px;font-size:12.4px;color:#1a1a1a;">47</div>
<div class="a" style="left:858.4px;top:581px;width:488.6px;height:1px;background:#dedede"></div>
<div class="a" style="left:831.6px;top:590px;width:11.6px;height:11.6px;border:1px solid #b4b4b4;border-radius:2px;background:#fff"></div>
<div class="t" style="left:865.50px;top:592.00px;font-size:12.4px;color:#1a1a1a;letter-spacing:0.388px;">COMMON</div>
<div class="t" style="left:1106.36px;top:592.00px;font-size:12.4px;color:#1a6ec2;-webkit-text-stroke:0.3px currentColor;">277</div>
<div class="t" style="left:1189.60px;top:592.00px;font-size:12.4px;color:#1a1a1a;">24</div>
<div class="t" style="left:1274.16px;top:592.00px;font-size:12.4px;color:#1a1a1a;">247</div>
<div class="a" style="left:858.4px;top:611px;width:488.6px;height:1px;background:#dedede"></div>
<div class="a" style="left:831.6px;top:620px;width:11.6px;height:11.6px;border:1px solid #b4b4b4;border-radius:2px;background:#fff"></div>
<div class="t" style="left:865.50px;top:622.00px;font-size:12.4px;color:#1a1a1a;letter-spacing:-0.811px;">DEV.XASSETS.NET</div>
<div class="t" style="left:1113.25px;top:622.00px;font-size:12.4px;color:#1a6ec2;-webkit-text-stroke:0.3px currentColor;">1</div>
<div class="a" style="left:858.4px;top:641px;width:488.6px;height:1px;background:#dedede"></div>
<div class="a" style="left:831.6px;top:650px;width:11.6px;height:11.6px;border:1px solid #b4b4b4;border-radius:2px;background:#fff"></div>
<div class="t" style="left:865.50px;top:652.00px;font-size:12.4px;color:#1a1a1a;letter-spacing:-0.631px;">DEVELOPMENT</div>
<div class="t" style="left:1109.80px;top:652.00px;font-size:12.4px;color:#1a6ec2;-webkit-text-stroke:0.3px currentColor;">54</div>
<div class="t" style="left:1277.60px;top:652.00px;font-size:12.4px;color:#1a1a1a;">54</div>
<div class="a" style="left:858.4px;top:671px;width:488.6px;height:1px;background:#dedede"></div>
<div class="a" style="left:831.6px;top:680px;width:11.6px;height:11.6px;border:1px solid #b4b4b4;border-radius:2px;background:#fff"></div>
<div class="t" style="left:865.50px;top:682.00px;font-size:12.4px;color:#1a1a1a;letter-spacing:0.460px;">No Domain</div>
<div class="t" style="left:1109.80px;top:682.00px;font-size:12.4px;color:#1a6ec2;-webkit-text-stroke:0.3px currentColor;">19</div>
<div class="a" style="left:858.4px;top:701px;width:488.6px;height:1px;background:#dedede"></div>
<div class="a" style="left:831.6px;top:710px;width:11.6px;height:11.6px;border:1px solid #b4b4b4;border-radius:2px;background:#fff"></div>
<div class="t" style="left:865.50px;top:712.00px;font-size:12.4px;color:#1a1a1a;letter-spacing:-1.125px;">RESTRICTED</div>
<div class="t" style="left:1109.80px;top:712.00px;font-size:12.4px;color:#1a6ec2;-webkit-text-stroke:0.3px currentColor;">56</div>
<div class="t" style="left:1277.60px;top:712.00px;font-size:12.4px;color:#1a1a1a;">55</div>
<div class="a" style="left:858.4px;top:731px;width:488.6px;height:1px;background:#dedede"></div>
<div class="a" style="left:858px;top:551.5px;width:1px;height:180.0px;background:#dedede"></div>
<div class="a" style="left:1081px;top:551.5px;width:1px;height:180.0px;background:#dedede"></div>
<div class="a" style="left:1152px;top:551.5px;width:1px;height:180.0px;background:#dedede"></div>
<div class="a" style="left:1240px;top:551.5px;width:1px;height:180.0px;background:#dedede"></div>
<div class="a" style="left:1328px;top:551.5px;width:1px;height:180.0px;background:#dedede"></div>
<div class="a" style="left:825px;top:765px;width:522px;height:10px;background:#f4f4f4"></div>
<svg style="left:828px;top:767px" width="4" height="6" viewBox="0 0 4 6"><path d="M3.6 0L0.4 3 3.6 6z" fill="#b0b0b0"/></svg>
<svg style="left:1341px;top:767px" width="4" height="6" viewBox="0 0 4 6"><path d="M0.4 0L3.6 3 0.4 6z" fill="#b0b0b0"/></svg>
<div class="a" style="left:837px;top:767px;width:348px;height:6px;border-radius:3px;background:#c4c4c4"></div>
</div></div>
<div class="a" style="left:1361px;top:495px;width:521px;height:280px;overflow:hidden"><div class="a" style="left:-1361px;top:-495px;width:1920px;height:911px">
<div class="a" style="left:1361px;top:494.5px;width:323px;height:39.5px;background:#eef0f4"></div>
<div class="a" style="left:1361px;top:533.6px;width:521px;height:1.5px;background:#d3d3d3"></div>
<div class="a" style="left:1367px;top:509.2px;width:11.6px;height:11.6px;border:1px solid #b4b4b4;border-radius:2px;background:#fff"></div>
<div class="t" style="left:1400.40px;top:508.00px;font-size:12px;color:#2a2a2a;letter-spacing:-0.211px;-webkit-text-stroke:0.3px currentColor;">Data Source</div>
<div class="t" style="left:1597.80px;top:508.00px;font-size:12px;color:#2a2a2a;letter-spacing:0.144px;-webkit-text-stroke:0.3px currentColor;">Count</div>
<div class="a" style="left:1367px;top:544.6px;width:11.6px;height:11.6px;border:1px solid #b4b4b4;border-radius:2px;background:#fff"></div>
<div class="a" style="left:1394.5px;top:535px;width:198.9px;height:30px;overflow:hidden"><div class="t" style="left:6.6px;top:11px;font-size:12.6px;color:#1a1a1a;letter-spacing:0.09px">Total Discovered Assets</div></div>
<div class="t" style="left:1618.56px;top:546.00px;font-size:12.4px;color:#1a1a1a;">658</div>
<div class="a" style="left:1394.5px;top:565px;width:269.70000000000005px;height:1px;background:#dedede"></div>
<div class="a" style="left:1367px;top:574.6px;width:11.6px;height:11.6px;border:1px solid #b4b4b4;border-radius:2px;background:#fff"></div>
<div class="a" style="left:1394.5px;top:565px;width:198.9px;height:30px;overflow:hidden"><div class="t" style="left:6.6px;top:11px;font-size:12.6px;color:#1a1a1a;letter-spacing:0.09px">Total Discovered Assets In Service</div></div>
<div class="t" style="left:1618.56px;top:576.00px;font-size:12.4px;color:#1a1a1a;">658</div>
<div class="a" style="left:1394.5px;top:595px;width:269.70000000000005px;height:1px;background:#dedede"></div>
<div class="a" style="left:1367px;top:604.6px;width:11.6px;height:11.6px;border:1px solid #b4b4b4;border-radius:2px;background:#fff"></div>
<div class="a" style="left:1394.5px;top:595px;width:198.9px;height:30px;overflow:hidden"><div class="t" style="left:6.6px;top:11px;font-size:12.6px;color:#1a1a1a;letter-spacing:0.09px">IP Addresses Discovered</div></div>
<div class="t" style="left:1618.56px;top:606.00px;font-size:12.4px;color:#1a1a1a;">425</div>
<div class="a" style="left:1394.5px;top:625px;width:269.70000000000005px;height:1px;background:#dedede"></div>
<div class="a" style="left:1367px;top:634.6px;width:11.6px;height:11.6px;border:1px solid #b4b4b4;border-radius:2px;background:#fff"></div>
<div class="a" style="left:1394.5px;top:625px;width:198.9px;height:30px;overflow:hidden"><div class="t" style="left:6.6px;top:11px;font-size:12.6px;color:#1a1a1a;letter-spacing:0.09px">Unrecognised Discovered Devices</div></div>
<div class="t" style="left:1625.45px;top:636.00px;font-size:12.4px;color:#1a1a1a;">5</div>
<div class="a" style="left:1394.5px;top:655px;width:269.70000000000005px;height:1px;background:#dedede"></div>
<div class="a" style="left:1367px;top:664.6px;width:11.6px;height:11.6px;border:1px solid #b4b4b4;border-radius:2px;background:#fff"></div>
<div class="a" style="left:1394.5px;top:655px;width:198.9px;height:30px;overflow:hidden"><div class="t" style="left:6.6px;top:11px;font-size:12.6px;color:#1a1a1a;letter-spacing:0.09px">Undiscovered VMs detected</div></div>
<div class="t" style="left:1622.00px;top:666.00px;font-size:12.4px;color:#1a1a1a;">17</div>
<div class="a" style="left:1394.5px;top:685px;width:269.70000000000005px;height:1px;background:#dedede"></div>
<div class="a" style="left:1367px;top:694.6px;width:11.6px;height:11.6px;border:1px solid #b4b4b4;border-radius:2px;background:#fff"></div>
<div class="a" style="left:1394.5px;top:685px;width:198.9px;height:30px;overflow:hidden"><div class="t" style="left:6.6px;top:11px;font-size:12.6px;color:#1a1a1a;letter-spacing:0.09px">Computers Partially Discovered</div></div>
<div class="t" style="left:1622.00px;top:696.00px;font-size:12.4px;color:#1a1a1a;">36</div>
<div class="a" style="left:1394.5px;top:715px;width:269.70000000000005px;height:1px;background:#dedede"></div>
<div class="a" style="left:1367px;top:724.6px;width:11.6px;height:11.6px;border:1px solid #b4b4b4;border-radius:2px;background:#fff"></div>
<div class="a" style="left:1394.5px;top:715px;width:198.9px;height:30px;overflow:hidden"><div class="t" style="left:6.6px;top:11px;font-size:12.6px;color:#1a1a1a;letter-spacing:0.09px">Computers Fully Discovered</div></div>
<div class="t" style="left:1618.56px;top:726.00px;font-size:12.4px;color:#1a1a1a;">403</div>
<div class="a" style="left:1394.5px;top:745px;width:269.70000000000005px;height:1px;background:#dedede"></div>
<div class="a" style="left:1367px;top:754.6px;width:11.6px;height:11.6px;border:1px solid #b4b4b4;border-radius:2px;background:#fff"></div>
<div class="a" style="left:1394.5px;top:745px;width:198.9px;height:30px;overflow:hidden"><div class="t" style="left:6.6px;top:11px;font-size:12.6px;color:#1a1a1a;letter-spacing:0.09px">Disposed Assets</div></div>
<div class="t" style="left:1625.45px;top:756.00px;font-size:12.4px;color:#1a1a1a;">0</div>
<div class="a" style="left:1394px;top:535px;width:1px;height:240px;background:#dedede"></div>
<div class="a" style="left:1593px;top:535px;width:1px;height:240px;background:#dedede"></div>
<div class="a" style="left:1664px;top:535px;width:1px;height:240px;background:#dedede"></div>
<div class="a" style="left:1872px;top:535px;width:10px;height:240px;background:#f4f4f4"></div>
<svg style="left:1874px;top:539px" width="6" height="4" viewBox="0 0 6 4"><path d="M0 3.6L3 0.4 6 3.6z" fill="#b0b0b0"/></svg>
<svg style="left:1874px;top:768px" width="6" height="4" viewBox="0 0 6 4"><path d="M0 0.4L3 3.6 6 0.4z" fill="#b0b0b0"/></svg>
<div class="a" style="left:1874px;top:545.8px;width:6px;height:123.90000000000009px;border-radius:3px;background:#c4c4c4"></div>
</div></div>
</body></html>
